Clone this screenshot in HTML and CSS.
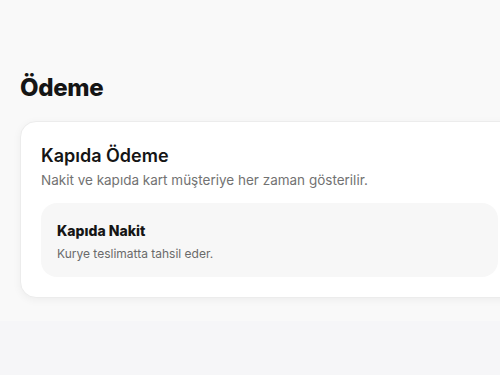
FILE: index.html
```html
<!DOCTYPE html>
<html lang="tr">
<head>
<meta charset="utf-8">
<link rel="stylesheet" href="styles.css">
</head>
<body>
<main class="page">
  <section class="section">
    <h1 class="title">Ödeme</h1>
    <div class="card">
      <h2 class="card-title">Kapıda Ödeme</h2>
      <p class="card-desc">Nakit ve kapıda kart müşteriye her zaman gösterilir.</p>
      <div class="option">
        <h3 class="option-title">Kapıda Nakit</h3>
        <p class="option-desc">Kurye teslimatta tahsil eder.</p>
      </div>
    </div>
  </section>
  <div class="rest"></div>
</main>
</body>
</html>
```

FILE: styles.css
```css
html, body {
  margin: 0;
  padding: 0;
  overflow: hidden;
}
body {
  font-family: "Inter", "Liberation Sans", sans-serif;
  background: #f6f6f8;
  color: #151515;
  width: 500px;
  height: 375px;
}
.page {
  display: flex;
  flex-direction: column;
  height: 100%;
}
.section {
  background: #f9f9f9;
  padding: 72px 0 23px 20px;
  display: flex;
  flex-direction: column;
  gap: 17px;
}
.title {
  margin: 0;
  font-size: 24px;
  line-height: 32px;
  font-weight: 800;
  letter-spacing: -0.3px;
}
.card {
  width: 499px;
  box-sizing: border-box;
  background: #fff;
  border: 1px solid #ececec;
  border-radius: 16px;
  box-shadow: 0 2px 8px rgba(0,0,0,0.05);
  padding: 22px 20px 20px 20px;
  display: flex;
  flex-direction: column;
}
.card-title {
  margin: 0;
  font-size: 18px;
  line-height: 24px;
  font-weight: 600;
}
.card-desc {
  margin: 2px 0 0;
  font-size: 13.5px;
  line-height: 20px;
  color: #727272;
}
.option {
  margin-top: 13px;
  background: #f7f7f7;
  border-radius: 16px;
  padding: 19px 16px 15px;
  display: flex;
  flex-direction: column;
  gap: 6px;
}
.option-title {
  margin: 0;
  font-size: 14px;
  line-height: 18px;
  font-weight: 800;
}
.option-desc {
  margin: 0;
  font-size: 12px;
  line-height: 16px;
  color: #6a6a6a;
}
.rest {
  flex: 1;
}
```
